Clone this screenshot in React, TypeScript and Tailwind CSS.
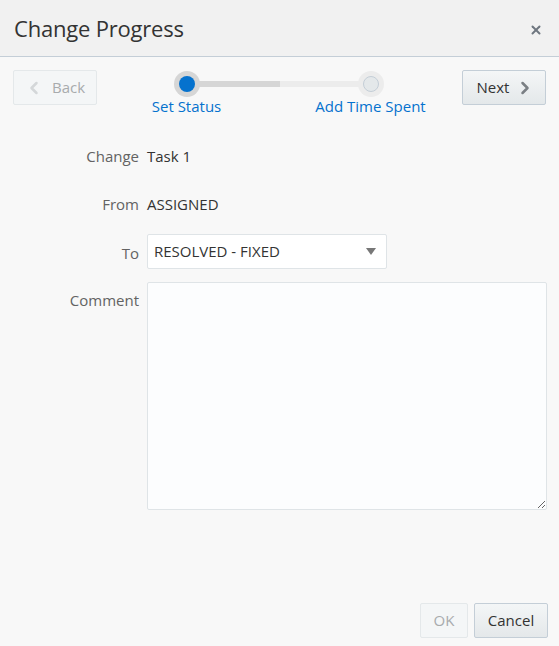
import { ChevronLeft, ChevronRight, X } from "lucide-react";

const font = { fontFamily: '"Segoe UI", "Open Sans", "Noto Sans", sans-serif' };

function Row({ label, children }: { label: string; children: React.ReactNode }) {
  return (
    <div className="flex items-center">
      <div className="w-[139px] shrink-0 text-right text-[15px] text-[#636363]">{label}</div>
      <div className="ml-[8px] text-[15px] text-[#333]">{children}</div>
    </div>
  );
}

export default function App() {
  return (
    <div className="flex h-[646px] w-[559px] flex-col bg-[#f8f8f8]" style={font}>
      {/* header */}
      <div className="flex h-[57px] shrink-0 items-center justify-between border-b border-[#c4ced7] bg-[#f1f1f1] pl-[14px] pr-[16px]">
        <h1 className="text-[22px] leading-none text-[#333] tracking-[-0.2px]">Change Progress</h1>
        <X size={14} strokeWidth={3.4} className="mt-[4px] text-[#6f7780]" />
      </div>

      {/* train */}
      <div className="flex items-start justify-between px-[13px] pt-[13px]">
        <button className="flex h-[35px] w-[84px] items-center gap-[8px] rounded-[2px] border border-[#e4e8ea] bg-[#f4f6f7] pl-[10px] text-[15px] text-[#a8abad]">
          <ChevronLeft size={20} strokeWidth={3} className="text-[#d4d7d9]" />
          Back
        </button>

        <div className="relative mt-[1px] h-[50px] w-[300px]">
          <div className="absolute left-[57px] top-[10px] h-[6px] w-[93px] bg-[#d6d6d6]" />
          <div className="absolute left-[150px] top-[10px] h-[6px] w-[91px] bg-[#ececec]" />
          <div className="absolute left-[44px] top-0 flex h-[26px] w-[26px] items-center justify-center rounded-full bg-[#d6d6d6]">
            <div className="h-[16px] w-[16px] rounded-full bg-[#0572ce]" />
          </div>
          <div className="absolute left-[228px] top-0 flex h-[26px] w-[26px] items-center justify-center rounded-full bg-[#ececec]">
            <div className="h-[16px] w-[16px] rounded-full border border-[#c4ced7] bg-[#e4e8ea]" />
          </div>
          <div className="absolute left-[7px] top-[24px] w-[100px] text-center text-[15px] text-[#0572ce]">Set Status</div>
          <div className="absolute left-[181px] top-[24px] w-[120px] text-center text-[15px] text-[#0572ce]">Add Time Spent</div>
        </div>

        <button className="flex h-[35px] w-[84px] items-center justify-center gap-[6px] rounded-[2px] border border-[#c4ced7] bg-gradient-to-b from-[#f4f6f7] to-[#e4e8ea] pl-[4px] text-[15px] text-[#333]">
          Next
          <ChevronRight size={20} strokeWidth={3} className="text-[#7a7f84]" />
        </button>
      </div>

      {/* form */}
      <div className="mt-[24px] flex flex-col gap-[25px]">
        <Row label="Change">Task 1</Row>
        <Row label="From">ASSIGNED</Row>
      </div>
      <div className="mt-[19px] flex flex-col gap-[13px]">
        <div className="flex items-center">
          <div className="mt-[3px] w-[139px] shrink-0 text-right text-[15px] text-[#636363]">To</div>
          <div className="ml-[8px] flex h-[35px] w-[240px] items-center justify-between rounded-[2px] border border-[#dfe4e7] bg-white pl-[6px] pr-[10px] text-[15px] text-[#333]">
            RESOLVED - FIXED
            <span className="h-0 w-0 border-x-[5px] border-t-[7px] border-x-transparent border-t-[#777]" />
          </div>
        </div>
        <div className="flex items-start">
          <div className="w-[139px] shrink-0 pt-[7px] text-right text-[15px] text-[#636363]">Comment</div>
          <textarea className="ml-[8px] h-[228px] w-[400px] rounded-[2px] border border-[#dfe4e7] bg-[#fcfdfe] outline-none" />
        </div>
      </div>

      {/* footer */}
      <div className="mt-auto flex justify-end gap-[6px] pb-[8px] pr-[11px]">
        <button className="h-[35px] w-[48px] rounded-[2px] border border-[#e4e8ea] bg-[#f4f6f7] text-[15px] text-[#a8abad]">OK</button>
        <button className="h-[35px] w-[74px] rounded-[2px] border border-[#c4ced7] bg-gradient-to-b from-[#f4f6f7] to-[#e4e8ea] text-[15px] text-[#333]">Cancel</button>
      </div>
    </div>
  );
}
